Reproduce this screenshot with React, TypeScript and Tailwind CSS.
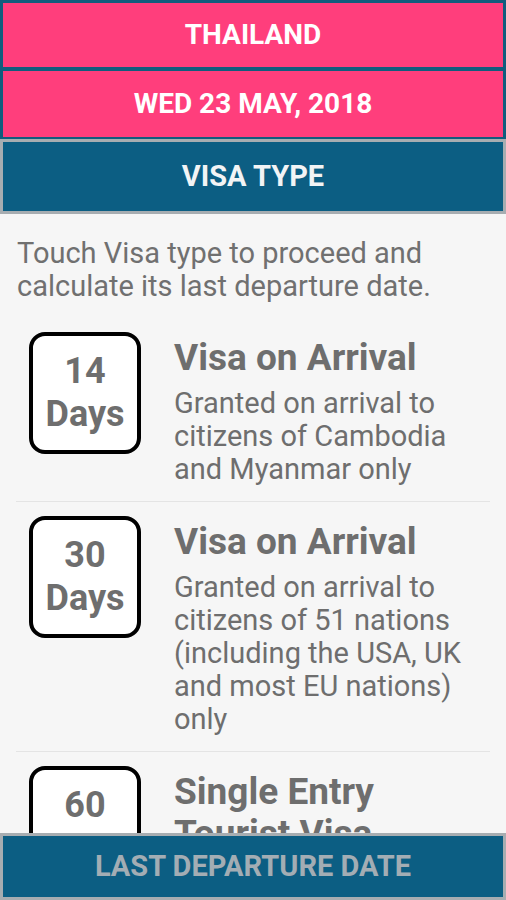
import React from 'react';

const visas = [
  {
    days: '14',
    title: ['Visa on Arrival'],
    desc: ['Granted on arrival to', 'citizens of Cambodia', 'and Myanmar only'],
  },
  {
    days: '30',
    title: ['Visa on Arrival'],
    desc: ['Granted on arrival to', 'citizens of 51 nations', '(including the USA, UK', 'and most EU nations)', 'only'],
  },
  {
    days: '60',
    title: ['Single Entry', 'Tourist Visa'],
    desc: ['Granted in advance at', 'a Thai embassy or', 'consulate'],
  },
];

const VisaRow = ({ v }: any) => (
  <div className="flex border-b border-[#e4e4e4] pt-[14px] pb-[15px]">
    <div className="ml-[13px] w-[112px] h-[122px] shrink-0 rounded-[16px] border-[4px] border-black bg-white flex flex-col items-center justify-center font-bold text-[36px] leading-[43px] text-[#6e6e6e]">
      <span>{v.days}</span>
      <span>Days</span>
    </div>
    <div className="ml-[33px] pt-[5px] text-[#6e6e6e] whitespace-nowrap">
      {v.title.map((t: string) => (
        <div key={t} className="text-[37px] leading-[42px] font-bold">{t}</div>
      ))}
      <div className="mt-[8px] text-[29px] leading-[33px]">
        {v.desc.map((d: string) => (
          <div key={d}>{d}</div>
        ))}
      </div>
    </div>
  </div>
);

export default function App() {
  return (
    <div className="h-[900px] w-[506px] flex flex-col bg-[#f6f6f6] overflow-hidden" style={{ fontFamily: 'Roboto, "Noto Sans", sans-serif' }}>
      <div className="bg-[#115c7d] px-[3px] pt-[3px] pb-[2px] flex flex-col gap-[4px]">
        <div className="h-[64px] bg-[#ff3e7c] flex items-center justify-center text-white font-bold text-[28px]">THAILAND</div>
        <div className="h-[66px] bg-[#ff3e7c] flex items-center justify-center text-white font-bold text-[28px]">WED 23 MAY, 2018</div>
      </div>
      <div className="h-[75px] shrink-0 border-[3px] border-[#a7adb1] bg-[#0c5e83] flex items-center justify-center text-[#f2f4f5] font-bold text-[29px]">VISA TYPE</div>

      <div className="flex-1 overflow-hidden">
        <p className="px-[17px] pt-[23px] text-[29px] leading-[33px] text-[#707070]">
          Touch Visa type to proceed and calculate its last departure date.
        </p>
        <div className="px-[16px] mt-[15px]">
          {visas.map(v => (
            <VisaRow key={v.days} v={v} />
          ))}
        </div>
      </div>

      <div className="h-[67px] shrink-0 border-[3px] border-[#a7adb1] bg-[#0c5e83] flex items-center justify-center text-[#a3adb4] font-bold text-[29px]">LAST DEPARTURE DATE</div>
    </div>
  );
}
